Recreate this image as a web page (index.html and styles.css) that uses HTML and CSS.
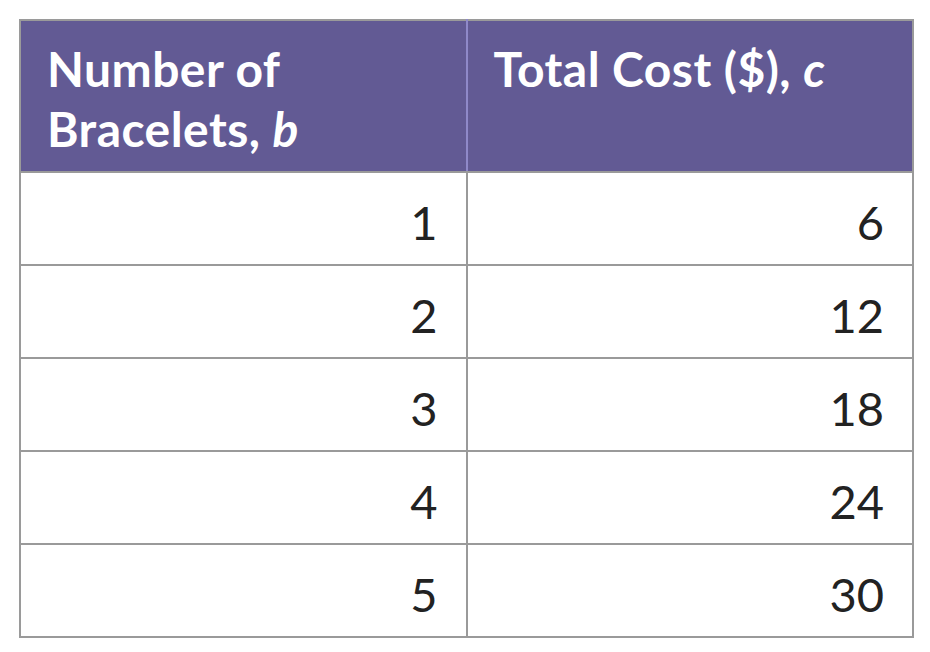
FILE: index.html
```html
<!DOCTYPE html>
<html>
<head>
<meta charset="utf-8">
<link rel="stylesheet" href="styles.css">
</head>
<body>
<table class="data">
  <thead>
    <tr>
      <th class="head">Number of<br>Bracelets, <i>b</i></th>
      <th class="head">Total Cost ($), <i>c</i></th>
    </tr>
  </thead>
  <tbody>
    <tr><td class="cell">1</td><td class="cell">6</td></tr>
    <tr><td class="cell">2</td><td class="cell">12</td></tr>
    <tr><td class="cell">3</td><td class="cell">18</td></tr>
    <tr><td class="cell">4</td><td class="cell">24</td></tr>
    <tr><td class="cell">5</td><td class="cell">30</td></tr>
  </tbody>
</table>
</body>
</html>
```
FILE: styles.css
```css
html, body {
  margin: 0;
  padding: 0;
  background: #ffffff;
}
body {
  padding: 19px 0 0 19px;
  font-family: "Lato", "Liberation Sans", sans-serif;
}
.data {
  border-collapse: collapse;
  width: 895px;
  table-layout: fixed;
  border: 2px solid #9a9a9a;
}
.head {
  background: #625a94;
  color: #ffffff;
  font-weight: 700;
  font-size: 48px;
  letter-spacing: 0.45px;
  line-height: 60px;
  text-align: left;
  vertical-align: top;
  height: 152px;
  box-sizing: border-box;
  padding: 18px 16px 0 26px;
  border-left: 2px solid #8f89c9;
  border-bottom: 2px solid #9a9a9a;
}
.head:first-child {
  border-left: 2px solid #9a9a9a;
}
.head i {
  font-style: italic;
}
.cell {
  font-size: 47px;
  font-weight: 400;
  color: #222222;
  text-align: right;
  vertical-align: middle;
  height: 93px;
  box-sizing: border-box;
  padding: 6px 28px 0 10px;
  border: 2px solid #9a9a9a;
}
```
